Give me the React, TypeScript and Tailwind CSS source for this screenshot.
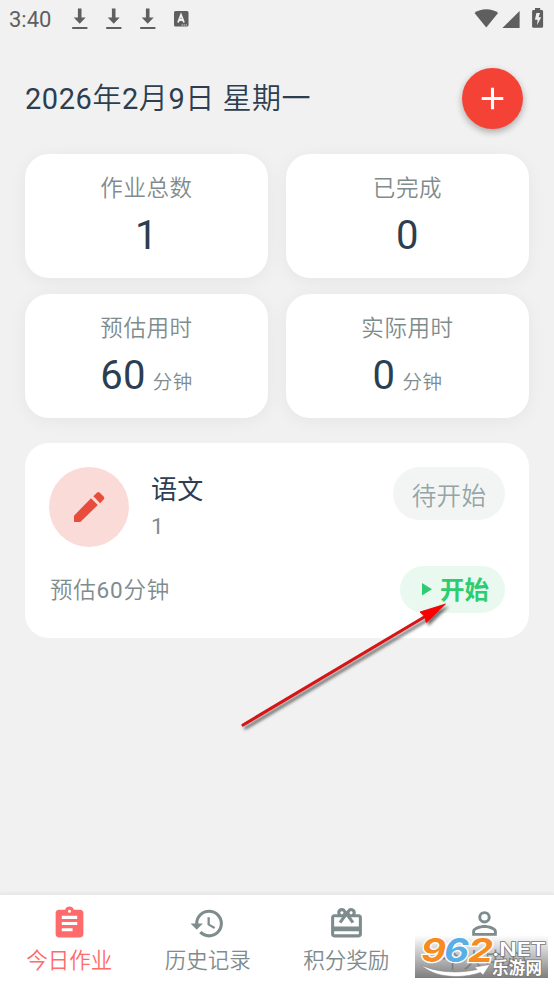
import React, { useState } from 'react';
import { MdAdd, MdAssignment, MdHistory, MdPersonOutline, MdRedeem } from 'react-icons/md';
import type { IconType } from 'react-icons';

const stats = [
  { label: '作业总数', value: 1 },
  { label: '已完成', value: 0 },
  { label: '预估用时', value: 60, unit: '分钟' },
  { label: '实际用时', value: 0, unit: '分钟' },
];

const tabs: { label: string; icon: IconType }[] = [
  { label: '今日作业', icon: MdAssignment },
  { label: '历史记录', icon: MdHistory },
  { label: '积分奖励', icon: MdRedeem },
  { label: '个人中心', icon: MdPersonOutline },
];

// Latin digits keep the regular weight inside the lighter Chinese text
const Num: React.FC<{ children: React.ReactNode }> = ({ children }) => (
  <span className="font-normal">{children}</span>
);

const DownloadIcon = () => (
  <svg width="16" height="22" viewBox="0 0 16 22" fill="#5f5f5f">
    <path d="M5.9 0.5h3.6v9h4.2L7.7 15.8 1.7 9.5h4.2zM0.2 19h15.2v2H0.2z" />
  </svg>
);

const PencilIcon = () => (
  <svg width="40" height="40" viewBox="0 0 24 24" fill="currentColor">
    <path d="M3 17.2V21h3.800L17.300 10.800 13.200 6.700z" />
    <path d="M20.900 7.300a1 1 0 0 0 0-1.400l-2.600-2.600a1 1 0 0 0-1.400 0l-2.300 2.300 4.100 4.100z" />
  </svg>
);

const StatusBar = () => (
  <div className="flex h-[38px] items-center justify-between pl-[9px] pr-[10px] text-[#5f5f5f]">
    <div className="flex items-center">
      <span className="w-[63px] pt-0.5 text-[22px] leading-none">3:40</span>
      <div className="flex gap-[18px]">
        <DownloadIcon />
        <DownloadIcon />
        <DownloadIcon />
      </div>
      <svg className="ml-[18px]" width="15" height="16" viewBox="0 0 15 16">
        <rect width="14.5" height="15.5" rx="1.5" fill="#5f5f5f" />
        <path d="M4 11.5 7 3.8l3 7.700M5.200 9h3.600" fill="none" stroke="#f1f1f1" strokeWidth="1.800" />
        <path d="M7.500 14h5.500" stroke="#f1f1f1" strokeWidth="0.800" strokeDasharray="1.500 0.600" />
      </svg>
    </div>
    <svg width="70" height="22" viewBox="0 0 70 22" fill="#5f5f5f">
      <path d="M12.300 19.600 0.500 5C3.800 2.300 7.700 1.200 12.300 1.200S20.800 2.300 24.100 5z" />
      <path d="M45.600 3v17H28.400z" />
      <path d="M61 0h5.200v2h1.500a1.400 1.400 0 0 1 1.400 1.400v15a1.400 1.400 0 0 1-1.400 1.400h-8.200a1.400 1.400 0 0 1-1.400-1.400v-15A1.400 1.400 0 0 1 59.500 2H61z" />
      <path d="M62.400 5h3.600l-1.400 4.200h2.600l-4.200 8 .6-5.400h-2.700z" fill="#f1f1f1" />
    </svg>
  </div>
);

const SiteBadge = () => (
  <svg className="absolute left-[415px] top-[930px]" width="139" height="48" viewBox="0 0 139 48">
    <defs>
      <linearGradient id="badgeFade" x1="0" y1="0" x2="0" y2="1">
        <stop offset="0" stopColor="#777" stopOpacity="0" />
        <stop offset="1" stopColor="#777" stopOpacity="0.95" />
      </linearGradient>
    </defs>
    <rect y="5" width="133" height="43" fill="url(#badgeFade)" />
    <path d="M6 35C20 42 42 44 62 39.500L59.500 37 75 34.500 68 45l-2.500-2.500C45 49.500 19 47.500 6 35z" fill="#fff" stroke="#888" strokeWidth="0.600" />
    <g fontFamily="Inter, 'Liberation Sans', sans-serif" fontWeight="700" fontStyle="italic" fontSize="33" stroke="#fff" strokeWidth="2.500" paintOrder="stroke">
      <text x="6" y="32" textLength="25" lengthAdjust="spacingAndGlyphs" fill="#f68b1f">9</text>
      <text x="29" y="32" textLength="25" lengthAdjust="spacingAndGlyphs" fill="#5aaee5">6</text>
      <text x="53" y="32" textLength="25" lengthAdjust="spacingAndGlyphs" fill="#f68b1f">2</text>
    </g>
    <g fill="#fff" stroke="#777" strokeWidth="1.500" paintOrder="stroke">
      <text x="77" y="25.500" fontFamily="Inter, sans-serif" fontWeight="600" fontSize="19" textLength="54" lengthAdjust="spacingAndGlyphs">.NET</text>
      <text x="77" y="44" fontFamily="'Noto Sans CJK SC', sans-serif" fontWeight="700" fontSize="16.500" textLength="50">乐游网</text>
    </g>
  </svg>
);

const PointerArrow = () => (
  <svg className="absolute left-[235px] top-[595px]" width="225" height="145" viewBox="0 0 225 145">
    <defs>
      <filter id="arrowShadow" x="-10%" y="-10%" width="125%" height="130%">
        <feDropShadow dx="2.500" dy="3" stdDeviation="1.800" floodColor="#000" floodOpacity="0.550" />
      </filter>
    </defs>
    <g filter="url(#arrowShadow)">
      <path d="M8 130 191 21" stroke="#d41414" strokeWidth="3.200" strokeLinecap="round" />
      <path d="M210.500 9 185 17l5 4.500 1.200 6z" fill="#f00" stroke="#d00" strokeWidth="0.800" />
    </g>
  </svg>
);

const App: React.FC = () => {
  const [activeTab, setActiveTab] = useState('今日作业');

  return (
    <div className="relative flex h-[984px] w-[554px] flex-col overflow-hidden bg-[#f1f1f1] font-[Roboto,'Noto_Sans_CJK_SC',sans-serif] text-[#2c3e50]">
      <StatusBar />

      <main className="flex flex-1 flex-col px-[25px] pt-[29px]">
        <header className="flex h-[62px] items-center justify-between pr-1.5">
          <h1 className="pt-0.5 text-[29px] font-[350] leading-none tracking-[0.55px]">
            <Num>2026</Num>年<Num>2</Num>月<Num>9</Num>日 星期一
          </h1>
          <button className="flex size-[61px] items-center justify-center rounded-full bg-[#f44336] text-white shadow-[0_3px_7px_rgba(0,0,0,0.3)]">
            <MdAdd size={37} />
          </button>
        </header>

        <section className="mt-[25px] grid grid-cols-2 gap-x-[18px] gap-y-4">
          {stats.map((stat) => (
            <div key={stat.label} className="flex h-[124px] flex-col items-center rounded-[24px] bg-white pt-[17px] shadow-[0_3px_18px_rgba(0,0,0,0.05)]">
              <span className="text-[22.500px] font-[350] leading-[34px] tracking-[0.6px] text-[#7f8c8d]">{stat.label}</span>
              <div className="flex items-baseline leading-[62px]">
                <span className="text-[40px] tracking-[0.3px]">{stat.value}</span>
                {stat.unit && <span className="ml-[7px] text-[19.500px] font-[350] tracking-[0.5px] text-[#7f8c8d]">{stat.unit}</span>}
              </div>
            </div>
          ))}
        </section>

        <section className="mt-[25px] h-[195px] rounded-[24px] bg-white px-6 pt-6">
          <div className="flex items-start">
            <div className="flex size-20 items-center justify-center rounded-full bg-[#fadbd8] text-[#e74c3c]">
              <PencilIcon />
            </div>
            <div className="ml-[22px] flex-1 pt-[5px]">
              <h2 className="text-[26px] leading-[37px] tracking-[0.3px]">语文</h2>
              <p className="text-[22.500px] leading-[34px] text-[#7f8c8d]">1</p>
            </div>
            <span className="flex h-[53px] w-[112px] items-center justify-center rounded-full bg-[#f3f5f5] pt-2 text-[24.500px] font-[350] leading-none tracking-[0.4px] text-[#95a5a6]">
              待开始
            </span>
          </div>
          <div className="mt-[19px] flex items-center justify-between">
            <span className="pl-px pt-[3px] text-[22.500px] font-[350] tracking-[0.8px] text-[#7f8c8d]">
              预估<Num>60</Num>分钟
            </span>
            <button className="flex h-[47px] w-[105px] items-center justify-center rounded-full bg-[#e9f9ef] pl-1.5 text-[#2ecc71]">
              <svg width="10" height="13" viewBox="0 0 10 13" fill="currentColor">
                <path d="M0 0v12.500l10-6.250z" />
              </svg>
              <span className="ml-[8px] pt-1 text-[24.500px] font-bold leading-none">开始</span>
            </button>
          </div>
        </section>
      </main>

      <nav className="flex h-[90px] border-t border-[#e9e9e9] bg-white shadow-[0_-1px_3px_rgba(0,0,0,0.06)]">
        {tabs.map(({ label, icon: Icon }) => (
          <button
            key={label}
            onClick={() => setActiveTab(label)}
            className={`flex flex-1 flex-col items-center pt-[10px] ${activeTab === label ? 'text-[#ff6b6b]' : 'text-[#7f8c8d]'}`}
          >
            <Icon size={37} />
            <span className="text-[21.500px] font-[350] leading-[37px]">{label}</span>
          </button>
        ))}
      </nav>

      <PointerArrow />
      <SiteBadge />
    </div>
  );
};

export default App;
